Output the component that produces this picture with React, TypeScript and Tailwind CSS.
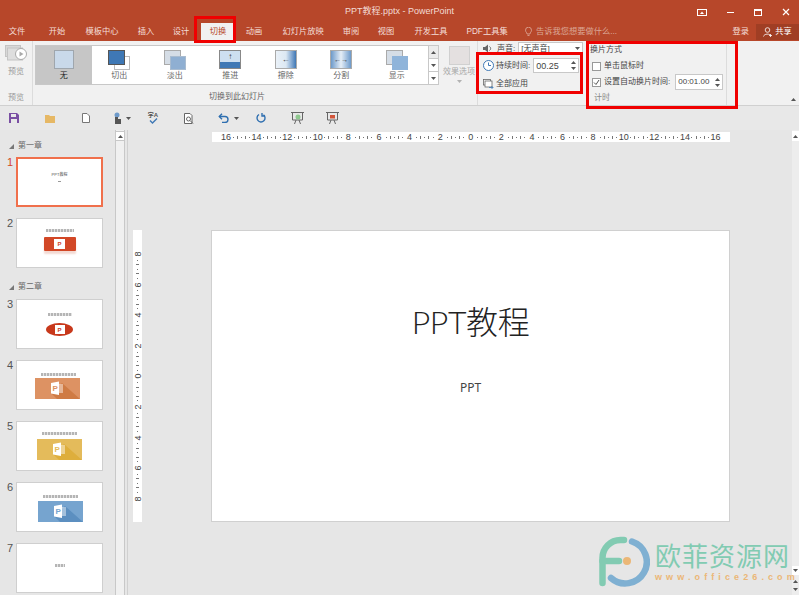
import { ReactNode } from 'react'

const font = '[font-family:"Liberation_Sans","Noto_Sans_CJK_SC",sans-serif]'

const tabs = [
  { label: '文件', w: 'w-[34px]' },
  { label: '开始', w: 'w-[46px]' },
  { label: '模板中心', w: 'w-[44px]' },
  { label: '插入', w: 'w-[44px]' },
  { label: '设计', w: 'w-[26px] mr-[7px]' },
  { label: '切换', w: 'w-[34px]', active: true },
  { label: '动画', w: 'w-[38px]' },
  { label: '幻灯片放映', w: 'w-[60px]' },
  { label: '审阅', w: 'w-[36px]' },
  { label: '视图', w: 'w-[34px]' },
  { label: '开发工具', w: 'w-[56px]' },
  { label: 'PDF工具集', w: 'w-[56px]' },
]

const Tile = ({ label, children, active }: { label: string; children: ReactNode; active?: boolean }) => (
  <div className={`flex w-[55.5px] shrink-0 flex-col items-center pt-[4px] text-[8px] leading-[12px] ${active ? 'bg-[#c6c6c6] text-[#222]' : 'text-[#666]'}`}>
    <div className="h-[20px] w-[22px]">{children}</div>
    <span>{label}</span>
  </div>
)

const Chevron = ({ up }: { up?: boolean }) => (
  <svg width="5" height="3" viewBox="0 0 5 3"><path d={up ? 'M0 3 L2.5 0 L5 3Z' : 'M0 0 L5 0 L2.5 3Z'} fill="#555" /></svg>
)

const Spinner = () => (
  <div className="flex flex-col gap-[3px]"><Chevron up /><Chevron /></div>
)

const Thumb = ({ n, active, children, className = 'mt-[11px]' }: { n: number; active?: boolean; children?: ReactNode; className?: string }) => (
  <div className={`flex items-start ${className}`}>
    <span className={`w-[16px] pl-[7px] text-[11px] leading-[10px] ${active ? 'text-[#d24726]' : 'text-[#555]'}`}>{n}</span>
    <div className={`flex h-[50px] w-[87px] flex-col items-center bg-white ${active ? 'border-2 border-[#f0704c]' : 'border border-[#cfcfcf]'}`}>
      {children}
    </div>
  </div>
)

const Section = ({ label, className }: { label: string; className: string }) => (
  <div className={`flex items-center gap-[4px] pl-[9px] text-[8px] leading-[10px] text-[#666] ${className}`}>
    <svg width="5" height="5" viewBox="0 0 5 5"><path d="M5 0 V5 H0Z" fill="#777" /></svg>
    {label}
  </div>
)

const PptMark = ({ bg, dark }: { bg: string; dark: string }) => (
  <svg width="45" height="21" viewBox="0 0 45 21">
    <rect width="45" height="21" fill={bg} />
    <path d="M27 5 L45 21 H22 L16 15Z" fill={dark} />
    <path d="M16 5 L24 3.5 V17 L16 15.5Z" fill="#fff" />
    <rect x="24" y="6" width="4" height="9" fill="#fff" opacity="0.45" />
    <text x="17.5" y="13" fontSize="8" fontWeight="700" fill={bg}>P</text>
  </svg>
)

const Caption = ({ className }: { className: string }) => (
  <div className={`h-[3px] bg-[repeating-linear-gradient(90deg,#b5b5b5_0,#b5b5b5_2px,#e4e4e4_2px,#e4e4e4_3px)] ${className}`} />
)

const topTicks = [16, 14, 12, 10, 8, 6, 4, 2, 0, 2, 4, 6, 8, 10, 12, 14, 16]
const sideTicks = [8, 6, 4, 2, 0, 2, 4, 6, 8]

const HMarks = () => (
  <div className="flex w-[20.6px] items-center justify-around">
    <i className="h-px w-px bg-[#777]" />
    <i className="h-[3px] w-px bg-[#777]" />
    <i className="h-px w-px bg-[#777]" />
    <i className="h-[3px] w-px bg-[#777]" />
    <i className="h-px w-px bg-[#777]" />
  </div>
)

const VMarks = () => (
  <div className="flex h-[22.6px] flex-col items-center justify-around">
    <i className="h-px w-px bg-[#777]" />
    <i className="h-px w-[3px] bg-[#777]" />
    <i className="h-px w-px bg-[#777]" />
    <i className="h-px w-[3px] bg-[#777]" />
    <i className="h-px w-px bg-[#777]" />
  </div>
)

export default function App() {
  return (
    <div className={`relative flex h-[595px] w-[799px] flex-col overflow-hidden bg-[#e6e6e6] ${font}`}>
      {/* title bar */}
      <header className="bg-[#b7472a] text-white">
        <div className="relative flex h-[23px] items-center justify-center pt-[1px] text-[9px] text-[#f3dcd5]">
          PPT教程.pptx - PowerPoint
          <div className="absolute right-[9px] top-[8px] flex items-center gap-[20px]">
            <svg width="10" height="7" viewBox="0 0 10 7"><rect x="0.5" y="0.5" width="9" height="6" fill="none" stroke="#fff" /><path d="M3 5 L5 2.5 L7 5Z" fill="#fff" /></svg>
            <div className="h-px w-[7px] bg-white" />
            <div className="h-[7px] w-[8px] border border-t-2 border-white" />
            <svg width="8" height="8" viewBox="0 0 8 8"><path d="M1 1 L7 7 M7 1 L1 7" stroke="#fff" strokeWidth="1.2" /></svg>
          </div>
        </div>
        <nav className="flex h-[18px] items-stretch text-[8.25px]">
          {tabs.map(t => (
            <div key={t.label} className={`flex items-center justify-center whitespace-nowrap ${t.w} ${t.active ? 'bg-[#f1f1f1] text-[#b7472a]' : 'text-[#f4ded8]'}`}>{t.label}</div>
          ))}
          <div className="ml-[10px] flex items-center gap-[4px] text-[#dba797]">
            <svg width="7" height="10" viewBox="0 0 7 10" fill="none" stroke="#e0ad9e" strokeWidth="0.8"><path d="M2 7 C2 5.5 0.5 5 0.5 3.2 A3 3 0 0 1 6.5 3.2 C6.5 5 5 5.5 5 7Z M2.5 8.5 H4.5" /></svg>
            告诉我您想要做什么...
          </div>
          <div className="ml-auto flex items-center">
            <span className="mr-[7px] text-[#f4ded8]">登录</span>
            <div className="flex h-[16px] w-[43px] items-center justify-center gap-[2px] bg-[#a03e24]">
              <svg width="10" height="10" viewBox="0 0 10 10" fill="none" stroke="#fff" strokeWidth="0.8"><circle cx="4.5" cy="3" r="2.3" /><path d="M0.5 9.5 C1 6.5 7 6.5 7.5 8.5 M7.5 7 V10 M6 8.5 H9" /></svg>
              共享
            </div>
          </div>
        </nav>
      </header>

      {/* ribbon */}
      <section className="flex h-[65px] border-b border-[#d0d0d0] bg-[#f1f1f1] text-[8px] leading-[12px] text-[#444]">
        <div className="flex w-[33px] shrink-0 flex-col items-center border-r border-[#dcdcdc] pt-[4px] text-[#9a9a9a]">
          <svg width="22" height="18" viewBox="0 0 22 18">
            <rect x="0.5" y="0.5" width="15" height="11" fill="#d8d8d8" stroke="#c4c4c4" />
            <rect x="2.5" y="3" width="15" height="12" fill="#dedede" stroke="#c4c4c4" />
            <circle cx="16" cy="9" r="5.5" fill="#fff" stroke="#aaa" />
            <path d="M14.5 6.5 L18.5 9 L14.5 11.5Z" fill="#aaa" />
          </svg>
          <span className="mt-[3px]">预览</span>
          <span className="mt-auto mb-[1px]">预览</span>
        </div>
        <div className="flex w-[408px] shrink-0 flex-col px-[2px] pt-[4px]">
          <div className="flex h-[40px] border border-[#c8c8c8] bg-white">
            <Tile label="无" active>
              <div className="ml-[1px] h-[19px] w-[20px] border border-[#9fa6ad] bg-[#c9d9ea]" />
            </Tile>
            <Tile label="切出">
              <div className="relative h-[20px] w-[22px]">
                <div className="absolute right-0 bottom-0 h-[14px] w-[16px] border border-[#bbb] bg-white" />
                <div className="absolute left-0 top-0 h-[15px] w-[17px] border border-[#555] bg-[#3f78b5]" />
              </div>
            </Tile>
            <Tile label="淡出">
              <div className="relative h-[20px] w-[22px]">
                <div className="absolute left-0 top-0 h-[15px] w-[17px] border border-[#aaa] bg-[#d5dde6]" />
                <div className="absolute right-0 bottom-0 h-[14px] w-[16px] border border-[#a9bcd0] bg-[#8fafd2]" />
              </div>
            </Tile>
            <Tile label="推进">
              <div className="flex h-[19px] w-[22px] flex-col items-center border border-[#888] bg-[#cddff0]">
                <div className="h-[11px] text-[8px] font-bold leading-[11px] text-[#333]">↑</div>
                <div className="h-[6px] w-full bg-[#3f78b5]" />
              </div>
            </Tile>
            <Tile label="擦除">
              <div className="flex h-[19px] w-[22px] items-center justify-center border border-[#aaa] bg-gradient-to-r from-[#eaf1f8] via-[#dce8f3] to-[#3f78b5] text-[8px] font-bold text-[#333]">←</div>
            </Tile>
            <Tile label="分割">
              <div className="flex h-[19px] w-[22px] items-center justify-center border border-[#aaa] bg-gradient-to-r from-[#6d9aca] via-[#e6eef6] to-[#6d9aca] text-[7px] font-bold text-[#333]">←→</div>
            </Tile>
            <Tile label="显示">
              <div className="relative h-[20px] w-[22px]">
                <div className="absolute left-0 top-0 h-[15px] w-[17px] border border-[#aaa] bg-[#d5dde6]" />
                <div className="absolute right-0 bottom-0 h-[14px] w-[16px] bg-[#8fb4da]" />
              </div>
            </Tile>
            <div className="ml-auto flex w-[10px] flex-col border-l border-[#c8c8c8]">
              <div className="flex flex-1 items-center justify-center bg-[#ececec]"><Chevron up /></div>
              <div className="flex flex-1 items-center justify-center border-y border-[#c8c8c8]"><Chevron /></div>
              <div className="flex flex-1 items-center justify-center"><Chevron /></div>
            </div>
          </div>
          <div className="mt-[6px] text-center text-[#666]">切换到此幻灯片</div>
        </div>
        <div className="flex w-[37px] shrink-0 flex-col items-center border-r border-[#dcdcdc] pt-[5px] text-[#a8a8a8]">
          <div className="h-[19px] w-[21px] border border-[#d0d0d0] bg-[#e4e0e0]" />
          <span className="mt-[1px] whitespace-nowrap">效果选项</span>
          <div className="mt-[2px] opacity-40"><Chevron /></div>
        </div>
        <div className="flex w-[107px] shrink-0 flex-col gap-[3px] pl-[5px] pt-[1px]">
          <div className="flex h-[13px] items-center gap-[3px] whitespace-nowrap">
            <svg width="9" height="9" viewBox="0 0 9 9" className="shrink-0"><path d="M0 3 H2 L5 0.5 V8.5 L2 6 H0Z" fill="#666" /><path d="M6.5 2.5 C8 3.5 8 5.5 6.5 6.5" stroke="#666" fill="none" /></svg>
            <span className="ml-[2px]">声音:</span>
            <div className="flex h-[13px] w-[65px] shrink-0 items-center justify-between border border-[#c8c8c8] bg-white px-[2px]">
              [无声音]<Chevron />
            </div>
          </div>
          <div className="flex h-[15px] items-center gap-[2px] whitespace-nowrap">
            <svg width="11" height="11" viewBox="0 0 11 11" fill="#fff" stroke="#3f78b5" className="shrink-0"><circle cx="5.5" cy="5.5" r="5" /><path d="M5.5 2.5 V5.5 H8" fill="none" /></svg>
            <span>持续时间:</span>
            <div className="ml-[1px] flex h-[15px] w-[46px] shrink-0 items-center justify-between border border-[#c8c8c8] bg-white px-[2px] text-[9px]">
              00.25<Spinner />
            </div>
          </div>
          <div className="mt-[2px] flex h-[12px] items-center gap-[2px] whitespace-nowrap">
            <svg width="11" height="10" viewBox="0 0 11 10" fill="#fff" stroke="#666" strokeWidth="0.8" className="shrink-0"><rect x="0.5" y="0.5" width="7" height="5.5" /><rect x="2" y="2" width="7" height="6" /><path d="M6 8.5 H10 M8.5 7 L10 8.5 L8.5 10" stroke="#3f78b5" fill="none" /></svg>
            全部应用
          </div>
        </div>
        <div className="flex w-[142px] shrink-0 flex-col border-r border-[#dcdcdc] pl-[5px] pt-[3px]">
          <span>换片方式</span>
          <div className="mt-[4px] flex h-[12px] items-center gap-[3px] pl-[2px]">
            <div className="h-[9px] w-[9px] border border-[#999] bg-white" />
            单击鼠标时
          </div>
          <div className="mt-[2px] flex h-[16px] items-center gap-[3px] whitespace-nowrap pl-[2px]">
            <div className="flex h-[9px] w-[9px] shrink-0 items-center justify-center border border-[#999] bg-white">
              <svg width="7" height="7" viewBox="0 0 7 7"><path d="M1 3.5 L3 5.5 L6 1" fill="none" stroke="#555" /></svg>
            </div>
            设置自动换片时间:
            <div className="ml-[2px] flex h-[16px] w-[48px] shrink-0 items-center justify-between border border-[#c8c8c8] bg-white px-[2px] text-[8px]">
              00:01.00<Spinner />
            </div>
          </div>
          <span className="mt-auto mb-[1px] pl-[4px] text-[#888]">计时</span>
        </div>
        <div className="flex flex-1 items-end justify-end pb-[4px] pr-[3px]"><Chevron up /></div>
      </section>

      {/* quick access */}
      <div className="flex h-[24px] items-center bg-[#e8e8e8]">
        <div className="ml-[9px]">
          <svg width="10" height="10" viewBox="0 0 10 10"><path d="M0 0 H8 L10 2 V10 H0Z" fill="#7a4fa3" /><rect x="2" y="1" width="5" height="3" fill="#e8e8e8" /><rect x="2" y="6" width="6" height="4" fill="#e8e8e8" /></svg>
        </div>
        <div className="ml-[26px]">
          <svg width="11" height="9" viewBox="0 0 11 9"><path d="M0 1 H4 L5 2 H10 V9 H0Z" fill="#e6b865" /></svg>
        </div>
        <div className="ml-[26px]">
          <svg width="8" height="10" viewBox="0 0 8 10"><path d="M0.5 0.5 H5 L7.5 3 V9.5 H0.5Z" fill="#fff" stroke="#777" /></svg>
        </div>
        <div className="ml-[23px] flex items-center gap-[4px]">
          <svg width="9" height="12" viewBox="0 0 9 12"><circle cx="4" cy="3" r="2.5" fill="#6d9aca" /><path d="M2 5 H5 V7 H8 V12 H2Z" fill="#555" /></svg>
          <Chevron />
        </div>
        <div className="ml-[16px] flex w-[12px] flex-col items-center">
          <span className="text-[6px] font-bold leading-[6px] text-[#555]">字A</span>
          <svg width="9" height="6" viewBox="0 0 9 6"><path d="M1 2.5 L3.5 5 L8 0.5" fill="none" stroke="#3f78b5" strokeWidth="1.4" /></svg>
        </div>
        <div className="ml-[25px]">
          <svg width="11" height="11" viewBox="0 0 11 11" fill="none" stroke="#666"><path d="M0.5 0.5 H6 L8 2.5 V10.5 H0.5Z" fill="#fff" /><circle cx="4.5" cy="6" r="2" /><path d="M6 7.5 L9 10.5" /></svg>
        </div>
        <div className="ml-[23px] flex items-center gap-[5px]">
          <svg width="11" height="10" viewBox="0 0 11 10" fill="none" stroke="#2f6fb0" strokeWidth="1.4"><path d="M1.5 3.5 H7 A3 3 0 0 1 7 9.5 H4" /><path d="M4 0.8 L1.3 3.5 L4 6.2" /></svg>
          <Chevron />
        </div>
        <div className="ml-[17px]">
          <svg width="10" height="10" viewBox="0 0 10 10" fill="none" stroke="#2f6fb0" strokeWidth="1.4"><path d="M7.5 1.8 A4 4 0 1 1 3 1.5" /><path d="M6 0 V3 H9" /></svg>
        </div>
        <div className="ml-[25px]">
          <svg width="13" height="12" viewBox="0 0 13 12" fill="none" stroke="#666"><path d="M0 0.5 H13 M1.5 1 V8 H11.5 V1 M5 8 L3.5 12 M8 8 L9.5 12" /><circle cx="7" cy="5" r="2.5" fill="#8fc98f" stroke="none" /></svg>
        </div>
        <div className="ml-[22px]">
          <svg width="13" height="12" viewBox="0 0 13 12" fill="none" stroke="#666"><path d="M0 0.5 H13 M1.5 1 V8 H11.5 V1 M5 8 L3.5 12 M8 8 L9.5 12" /><rect x="4" y="3" width="5" height="3.5" fill="#d2553a" stroke="none" /></svg>
        </div>
      </div>

      {/* workspace */}
      <main className="flex min-h-0 flex-1">
        <aside className="w-[115px] shrink-0 pt-[11px]">
          <Section label="第一章" className="" />
          <Thumb n={1} active className="mt-[6px]">
            <div className="mt-[13px] text-[4px] leading-[5px] text-[#555]">PPT教程</div>
            <div className="mt-[4px] h-px w-[3px] bg-[#999]" />
          </Thumb>
          <Thumb n={2}>
            <Caption className="mt-[10px] w-[28px]" />
            <div className="mt-[5px] flex h-[14px] w-[32px] items-center justify-center rounded-[1px] bg-[#d24726] shadow-[0_3px_2px_#f3d9d2]">
              <div className="flex h-[10px] w-[11px] items-center justify-center bg-white text-[6px] font-bold leading-none text-[#d24726]">P</div>
            </div>
          </Thumb>
          <Section label="第二章" className="mt-[14px]" />
          <Thumb n={3} className="mt-[7px]">
            <Caption className="mt-[13px] w-[24px]" />
            <div className="mt-[7px] flex h-[13px] w-[27px] items-center justify-center rounded-[50%] bg-[#c8391c]">
              <div className="flex h-[9px] w-[10px] items-center justify-center bg-white text-[6px] font-bold leading-none text-[#c8391c]">P</div>
            </div>
          </Thumb>
          <Thumb n={4}>
            <Caption className="ml-[-2px] mt-[12px] w-[35px]" />
            <div className="ml-[-4px] mt-[2px] flex"><PptMark bg="#dd9263" dark="#cf7b44" /></div>
          </Thumb>
          <Thumb n={5}>
            <Caption className="mt-[10px] w-[35px]" />
            <div className="ml-[-1px] mt-[4px] flex"><PptMark bg="#e4bb5b" dark="#deae3c" /></div>
          </Thumb>
          <Thumb n={6}>
            <Caption className="ml-[2px] mt-[12px] w-[35px]" />
            <div className="ml-[1px] mt-[3px] flex"><PptMark bg="#76a4cf" dark="#5c8fc0" /></div>
          </Thumb>
          <Thumb n={7}>
            <Caption className="mt-[20px] w-[10px]" />
          </Thumb>
        </aside>

        <div className="flex w-[10px] shrink-0 flex-col border-x border-[#c8c8c8] bg-[#f0f0f0] pt-[1px]">
          <div className="flex h-[10px] items-center justify-center border-y border-[#c8c8c8] bg-white"><Chevron up /></div>
        </div>
        <div className="ml-[2px] w-[1px] shrink-0 bg-[#d0d0d0]" />

        <div className="flex min-w-0 flex-1 flex-col">
          <div className="ml-[84px] mt-[2px] flex h-[10px] w-[518px] items-center bg-white pl-[9px] text-[9px] leading-none text-[#444]">
            {topTicks.map((t, i) => (
              <div key={i} className="flex items-center">
                <span className="w-[10px] text-center">{t}</span>
                {i < topTicks.length - 1 && <HMarks />}
              </div>
            ))}
          </div>
          <div className="mt-[88px] flex">
            <div className="ml-[5px] flex h-[292px] w-[9px] flex-col items-center bg-white pt-[20px] text-[9px] leading-none text-[#444]">
              {sideTicks.map((t, i) => (
                <div key={i} className="flex flex-col items-center">
                  <span className="flex h-[8px] w-[8px] -rotate-90 items-center justify-center">{t}</span>
                  {i < sideTicks.length - 1 && <VMarks />}
                </div>
              ))}
            </div>
            <div className="ml-[69px] flex h-[292px] w-[519px] flex-col items-center border border-[#d0d0d0] bg-white text-[#222]">
              <div className="mt-[69px] text-[32px] font-light leading-[44px] tracking-[-0.4px] [font-family:Lato,'Noto_Sans_CJK_SC',sans-serif]">PPT教程</div>
              <div className="mt-[36px] text-[12px] leading-[16px] text-[#444] [font-family:'Noto_Sans',sans-serif]">PPT</div>
            </div>
          </div>
        </div>

        <div className="flex w-[7px] shrink-0 flex-col bg-[#ededed] pb-[4px] pt-[1px]">
          <div className="flex h-[10px] items-center justify-center bg-white"><Chevron up /></div>
          <div className="mt-auto flex h-[9px] items-center justify-center bg-white"><Chevron /></div>
          <div className="mt-[5px] flex justify-center"><Chevron up /></div>
          <div className="mt-[5px] flex justify-center"><Chevron /></div>
        </div>
      </main>

      {/* red annotation boxes */}
      <div className="absolute left-[194px] top-[16px] h-[27px] w-[42px] border-[3px] border-[#f00000]" />
      <div className="absolute left-[476px] top-[52px] h-[42px] w-[107px] border-[3px] border-[#f00000]" />
      <div className="absolute left-[586px] top-[41px] h-[68px] w-[152px] border-[3px] border-[#f00000]" />

      {/* watermark */}
      <div className="absolute left-[598px] top-[536px] flex items-center gap-[5px]">
        <svg width="52" height="52" viewBox="0 0 52 52" fill="none" strokeLinecap="round">
          <path d="M4.5 47 V22 A18 18 0 0 1 22.5 4 H26" stroke="#82cbb2" strokeWidth="6.5" />
          <path d="M4.5 25 H21" stroke="#82cbb2" strokeWidth="6.5" />
          <path d="M34 5.5 A21.5 21.5 0 1 1 13 42" stroke="#7fb0d2" strokeWidth="6.5" />
          <circle cx="29" cy="25" r="4" fill="#ebb777" />
        </svg>
        <div className="flex flex-col pt-[1px]">
          <span className="text-[26px] leading-[28px] tracking-[1px] text-[#82cbb2]">欧菲资源网</span>
          <span className="text-[9px] font-bold leading-[12px] tracking-[4.1px] text-[#ebb777]">www.office26.com</span>
        </div>
      </div>
    </div>
  )
}
